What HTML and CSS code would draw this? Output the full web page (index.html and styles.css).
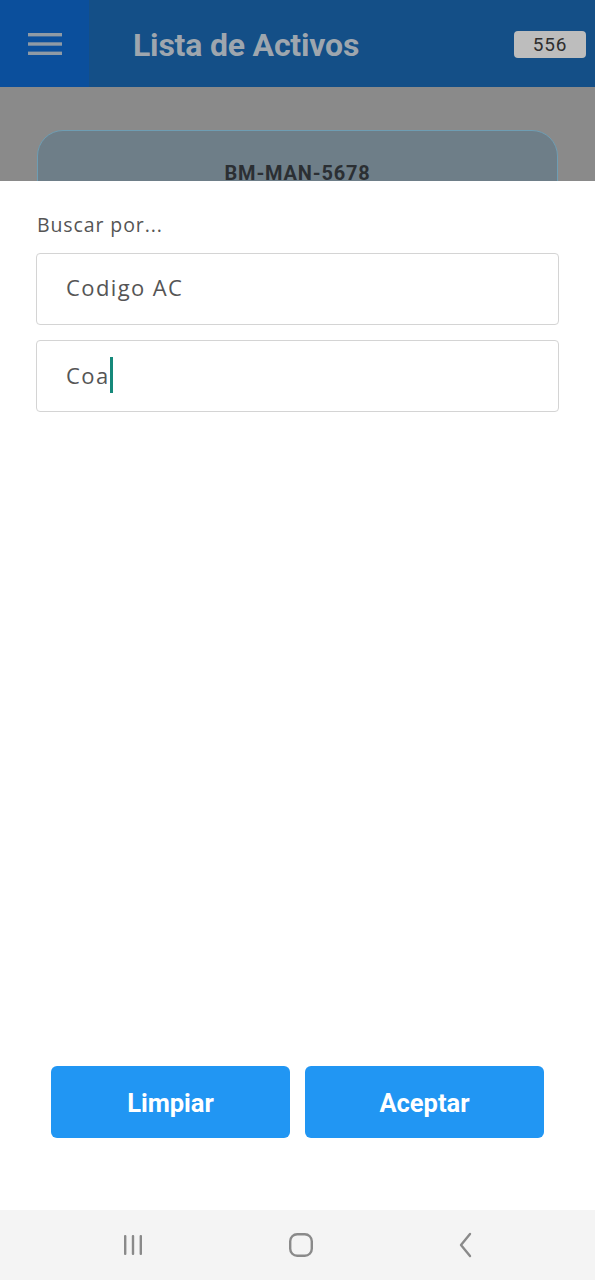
FILE: index.html
```html
<!DOCTYPE html>
<html lang="es">
<head>
<meta charset="utf-8">
<link rel="stylesheet" href="styles.css">
</head>
<body>
<div class="screen">
  <header class="appbar">
    <div class="menu-btn">
      <svg width="34" height="24" viewBox="0 0 34 24"><rect x="0" y="1" width="34" height="3.4" fill="#8f9aa5"/><rect x="0" y="10.3" width="34" height="3.4" fill="#8f9aa5"/><rect x="0" y="19.6" width="34" height="3.4" fill="#8f9aa5"/></svg>
    </div>
    <div class="title">Lista de Activos</div>
    <div class="badge">556</div>
  </header>
  <div class="backdrop">
    <div class="card"><span class="card-code">BM-MAN-5678</span></div>
  </div>
  <div class="sheet">
    <div class="label">Buscar por...</div>
    <div class="field">Codigo AC</div>
    <div class="field">Coa<span class="caret"></span></div>
    <div class="spacer"></div>
    <div class="actions">
      <button class="btn">Limpiar</button>
      <button class="btn">Aceptar</button>
    </div>
  </div>
  <nav class="navbar">
    <svg width="24" height="22" viewBox="0 0 24 22"><rect x="3" y="1" width="2.4" height="20" rx="1" fill="#8a8a8a"/><rect x="10.8" y="1" width="2.4" height="20" rx="1" fill="#8a8a8a"/><rect x="18.6" y="1" width="2.4" height="20" rx="1" fill="#8a8a8a"/></svg>
    <svg width="26" height="26" viewBox="0 0 26 26"><rect x="2.2" y="2.2" width="21.6" height="21.6" rx="7" fill="none" stroke="#8a8a8a" stroke-width="2.4"/></svg>
    <svg width="18" height="26" viewBox="0 0 18 26"><path d="M13 2 L4 13 L13 24" fill="none" stroke="#8a8a8a" stroke-width="2.4" stroke-linecap="round" stroke-linejoin="round"/></svg>
  </nav>
</div>
</body>
</html>
```
FILE: styles.css
```css
* { box-sizing: border-box; }
html, body { margin: 0; padding: 0; }
body { width: 595px; height: 1280px; overflow: hidden; background: #fff; }
.screen { display: flex; flex-direction: column; height: 1280px; position: relative; }
.appbar { height: 87px; background: #144f87; display: flex; align-items: center; flex-shrink: 0; }
.menu-btn { width: 89px; height: 87px; background: #0b4f9c; display: flex; align-items: center; justify-content: center; }
.title { font-family: Roboto, "Liberation Sans", sans-serif; font-weight: 700; font-size: 32px; color: #9ea6ae; margin-left: 44px; flex: 1; letter-spacing: -0.2px; margin-top: 2px; }
.badge { font-family: Roboto, "Liberation Sans", sans-serif; font-size: 19px; font-weight: 400; color: #2e2e2e; background: #bdbdbd; border-radius: 4px; width: 72px; height: 27px; display: flex; align-items: center; justify-content: center; margin-right: 9px; margin-top: 1px; letter-spacing: 0.8px; }
.backdrop { background: #8a8a8a; height: 94px; padding: 43px 37px 0 37px; flex-shrink: 0; overflow: hidden; }
.card { height: 120px; background: #6e7e88; border: 1.5px solid #6e9db3; border-radius: 26px; display: flex; justify-content: center; padding-top: 30px; }
.card-code { font-family: Roboto, "Liberation Sans", sans-serif; font-weight: 700; font-size: 20px; color: #2b2f33; letter-spacing: 0.8px; }
.sheet { position: absolute; top: 181px; left: 0; right: 0; height: 1029px; background: #fff; border-radius: 8px 8px 0 0; display: flex; flex-direction: column; padding: 30px 36px 0 36px; }
.label { font-family: "Open Sans", Inter, sans-serif; font-size: 19.5px; color: #555; margin-left: 1px; line-height: 28px; margin-bottom: 14px; letter-spacing: 0.9px; }
.field { height: 72px; border: 1px solid #d4d4d4; border-radius: 4px; display: flex; align-items: center; padding-left: 29px; padding-bottom: 4px; font-family: "Open Sans", Inter, sans-serif; font-size: 22px; color: #555; margin-bottom: 15px; letter-spacing: 1.4px; }
.field + .field { height: 72px; padding-bottom: 2px; }
.caret { display: inline-block; width: 3px; height: 36px; background: #15897a; margin-left: 0; }
.spacer { flex: 1; }
.actions { display: flex; gap: 15px; padding: 0 15px; margin-bottom: 72px; }
.btn { flex: 1; height: 72px; border: none; border-radius: 6px; background: #2196f3; color: #fff; font-family: Roboto, "Liberation Sans", sans-serif; font-weight: 700; font-size: 25.5px; padding-top: 2px; }
.navbar { position: absolute; left: 0; right: 0; bottom: 0; height: 70px; background: #f4f4f4; display: flex; align-items: center; justify-content: space-between; padding: 0 120px 0 121px; }
```
